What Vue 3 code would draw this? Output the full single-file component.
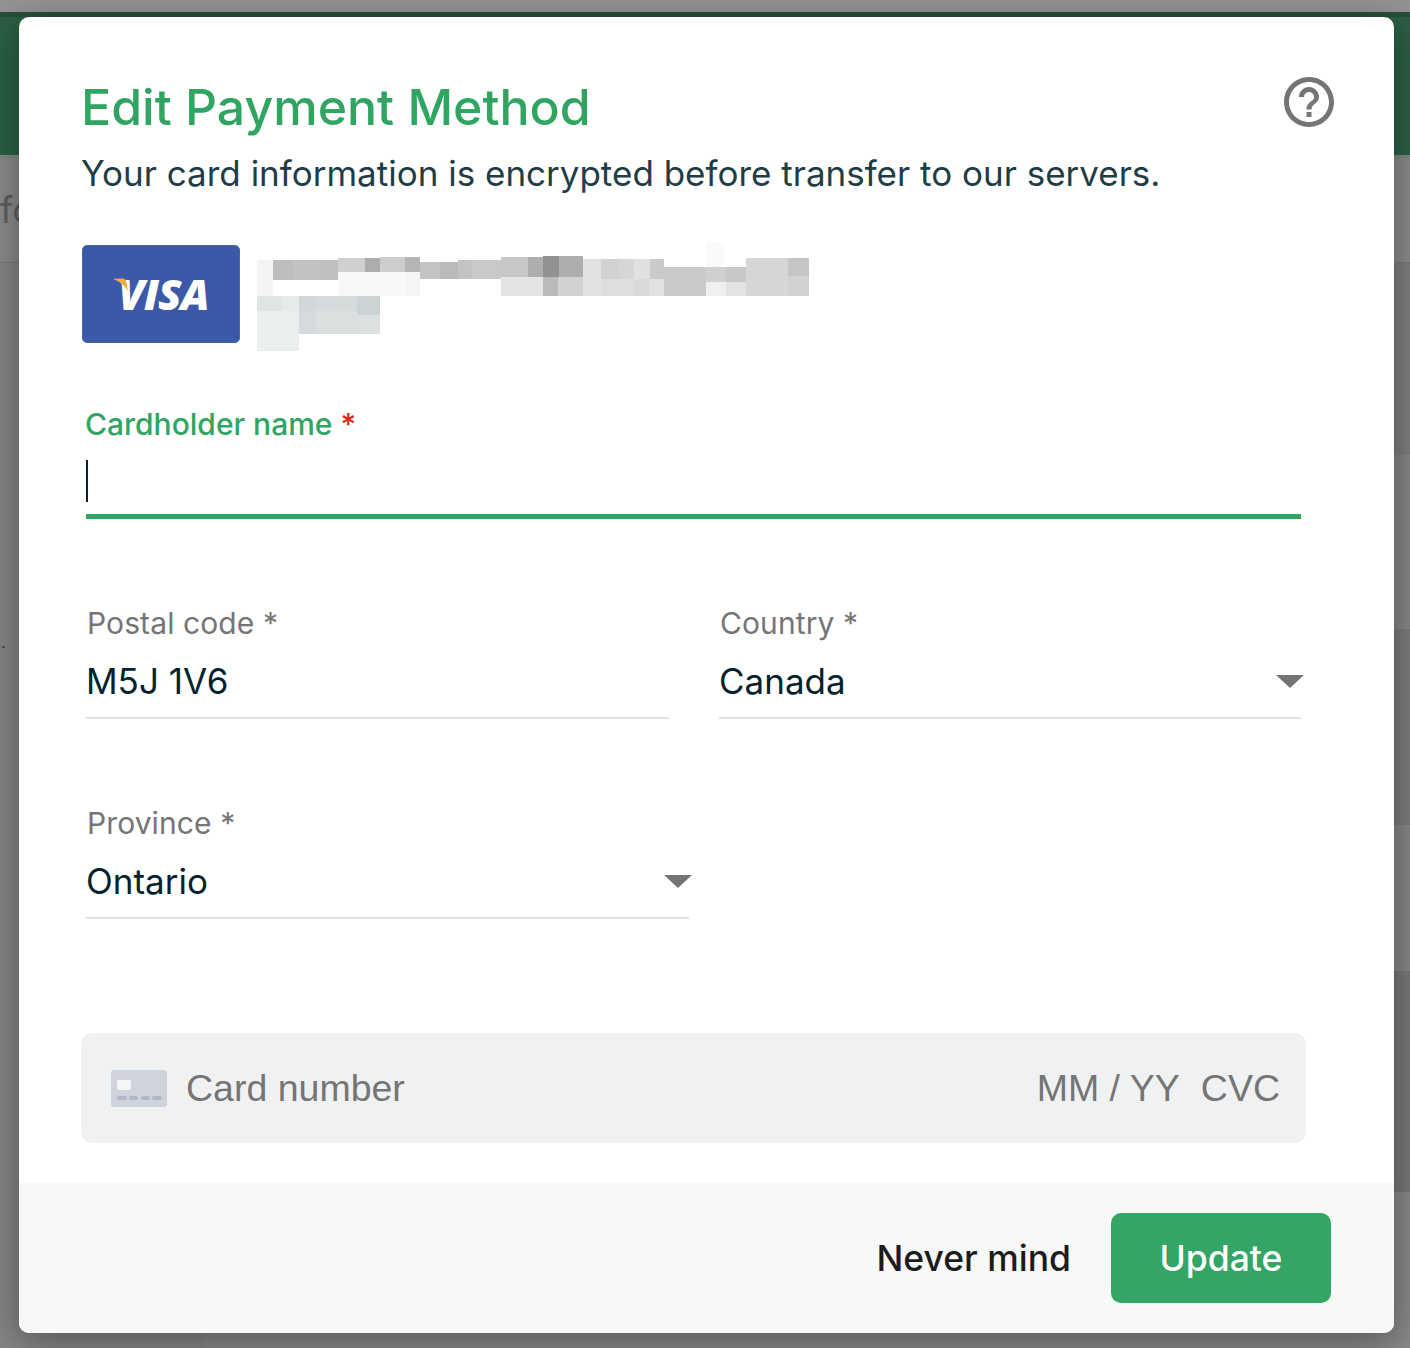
<script setup>
const blocks = [
  [19,75,44,108,'#f4f4f4'],[63,75,55,60,'#bebebe'],[118,75,77,60,'#c2c2c2'],[195,75,47,60,'#bfbfbf'],
  [242,69,74,42,'#d0d0d0'],[316,69,42,42,'#adadad'],[358,66,68,45,'#cdcdcd'],[426,66,42,45,'#b5b5b5'],
  [242,111,116,72,'#f7f7f7'],[358,111,72,72,'#f8f8f8'],[430,111,38,72,'#f5f5f5'],
  [468,81,54,51,'#c4c4c4'],[522,81,50,51,'#bababa'],[572,75,40,57,'#c3c3c3'],[612,75,78,57,'#c9c9c9'],
  [690,66,75,60,'#c8c8c8'],[765,66,41,60,'#aeaeae'],[806,63,44,63,'#929292'],[850,63,66,63,'#aeaeae'],
  [690,126,116,57,'#e4e4e4'],[806,126,41,57,'#b9b9b9'],[847,126,69,57,'#d2d2d2'],
  [916,72,50,111,'#e2e2e2'],[966,72,48,60,'#d2d2d2'],[1014,72,42,60,'#d6d6d6'],[1056,72,44,60,'#e0e0e0'],[1100,72,39,60,'#cacaca'],
  [966,132,90,51,'#dedede'],[1056,132,42,51,'#d9d9d9'],[1098,132,41,51,'#e1e1e1'],
  [1139,96,115,87,'#cacaca'],[1254,21,50,75,'#fafafa'],[1254,96,55,45,'#d0d0d0'],[1309,96,55,45,'#c8c8c8'],
  [1254,141,55,42,'#efefef'],[1309,141,55,42,'#e3e3e3'],[1364,69,116,114,'#d6d6d6'],[1480,69,58,54,'#c5c5c5'],[1480,123,58,60,'#d1d1d1'],
  [19,183,69,45,'#e0e4e4'],[88,183,47,45,'#e6eaea'],[135,183,47,45,'#d0d6d9'],[182,183,58,45,'#d5dbdd'],[240,183,55,45,'#d5dbdb'],[295,183,63,57,'#cbd3d5'],
  [19,228,116,120,'#ebeeef'],[135,228,47,69,'#d5dbdd'],[182,228,58,69,'#dae0e0'],[240,228,55,69,'#dae0e0'],[295,240,63,57,'#dce0e0']
]
const stripes = [
  { h: 192, c: '#7e7e7e' },
  { h: 174, c: '#868686' },
  { h: 196, c: '#7b7b7b' },
  { h: 146, c: '#868686' },
  { h: 221, c: '#787878' },
  { h: 157, c: '#888888' }
]
</script>

<template>
  <div class="page">
    <div class="backdrop">
      <div class="bd-top"></div>
      <div class="bd-green"></div>
      <div class="bd-tab"><span class="bd-text">fo</span></div>
      <div class="bd-lower">
        <div class="bd-side"><span class="bd-dot"></span></div>
        <div class="bd-main">
          <div v-for="(s, i) in stripes" :key="i" :style="{ height: s.h + 'px', background: s.c }"></div>
        </div>
      </div>
    </div>

    <section class="modal">
      <div class="body">
        <header class="head">
          <h1 class="title">Edit Payment Method</h1>
          <svg class="help" viewBox="0 0 24 24" width="60" height="60" aria-hidden="true">
            <path fill="#757575" d="M11 18h2v-2h-2v2zm1-16C6.48 2 2 6.48 2 12s4.48 10 10 10 10-4.48 10-10S17.52 2 12 2zm0 18c-4.41 0-8-3.59-8-8s3.59-8 8-8 8 3.59 8 8-3.59 8-8 8zm0-14c-2.21 0-4 1.79-4 4h2c0-1.1.9-2 2-2s2 .9 2 2c0 2-3 1.75-3 5h2c0-2.25 3-2.5 3-5 0-2.21-1.79-4-4-4z"/>
          </svg>
        </header>
        <p class="sub">Your card information is encrypted before transfer to our servers.</p>

        <div class="saved">
          <div class="visa">
            <span class="visa-text">VISA</span>
            <svg class="flick" viewBox="0 0 20 20" width="20" height="20" aria-hidden="true">
              <path fill="#f4a93a" d="M0 1C4 .6 7 .3 10 .6 12 .8 12.8 1.8 13.2 3.5L15 13C12 8 6 3 0 1z"/>
            </svg>
          </div>
          <svg class="pixels" viewBox="0 0 1568 375" preserveAspectRatio="none" width="570" height="125" shape-rendering="crispEdges" aria-hidden="true">
            <rect v-for="(b, i) in blocks" :key="i" :x="b[0]" :y="b[1]" :width="b[2]" :height="b[3]" :fill="b[4]" />
          </svg>
        </div>

        <div class="form">
          <div class="field field-active">
            <label class="label label-active">Cardholder name <span class="req">*</span></label>
            <div class="control control-active"><span class="cursor"></span></div>
          </div>
          <div class="row">
            <div class="field postal">
              <label class="label">Postal code *</label>
              <div class="control">M5J 1V6</div>
            </div>
            <div class="field country">
              <label class="label">Country *</label>
              <div class="control">Canada<span class="caret"></span></div>
            </div>
          </div>
          <div class="field province">
            <label class="label">Province *</label>
            <div class="control">Ontario<span class="caret"></span></div>
          </div>
        </div>

        <div class="stripe">
          <svg class="card-icon" viewBox="0 0 56 37" width="56" height="37" aria-hidden="true">
            <rect width="56" height="37" rx="3" fill="#cfd4dc"/>
            <rect x="6" y="10" width="14" height="10" rx="2" fill="#f4f5f7"/>
            <rect x="6" y="26" width="10" height="4" rx="2" fill="#b3b8c7"/>
            <rect x="18" y="26" width="9" height="4" rx="2" fill="#b3b8c7"/>
            <rect x="30" y="26" width="9" height="4" rx="2" fill="#b3b8c7"/>
            <rect x="41" y="26" width="10" height="4" rx="2" fill="#b3b8c7"/>
          </svg>
          <span class="ph ph-card">Card number</span>
          <span class="ph ph-date">MM / YY</span>
          <span class="ph ph-cvc">CVC</span>
        </div>
      </div>

      <footer class="foot">
        <button class="cancel" type="button">Never mind</button>
        <button class="update" type="button">Update</button>
      </footer>
    </section>
  </div>
</template>

<style>
html, body { margin: 0; padding: 0; background: #8a8a8a; overflow: hidden; }
</style>

<style scoped>
.page {
  position: relative;
  width: 1410px;
  height: 1348px;
  overflow: hidden;
  background: #858585;
  font-family: Inter, "Liberation Sans", sans-serif;
}
.backdrop { position: absolute; inset: 0; display: flex; flex-direction: column; }
.bd-top { height: 12px; background: #939393; }
.bd-green { height: 143px; background: #2b6044; border-top: 5px solid #264f38; box-sizing: border-box; }
.bd-tab { height: 108px; background: #8a8a8a; border-bottom: 1px solid #787878; box-sizing: border-box; border-top: 4px solid #7f8a83; overflow: hidden; }
.bd-text { display: block; margin-top: 31px; font-size: 36px; color: #5e5e5e; line-height: 40px; }
.bd-lower { flex: 1; display: flex; min-height: 0; }
.bd-side { position: relative; width: 204px; background: #858585; }
.bd-dot { position: absolute; left: 2px; top: 383px; width: 3px; height: 2px; background: #555; }
.bd-main { flex: 1; }

.modal {
  position: absolute;
  left: 19px;
  top: 17px;
  width: 1375px;
  height: 1316px;
  display: flex;
  flex-direction: column;
  background: #fff;
  border-radius: 10px;
  overflow: hidden;
  box-shadow: 0 8px 36px rgba(0, 0, 0, 0.38);
}
.body {
  flex: 1;
  min-height: 0;
  padding: 60px 60px 40px 63px;
  display: flex;
  flex-direction: column;
}
.head { display: flex; justify-content: space-between; align-items: flex-start; height: 60px; }
.title {
  margin: 0 0 0 -1px;
  font-size: 50px;
  line-height: 60px;
  font-weight: 500;
  color: #30a562;
}
.help { margin-top: -5px; margin-right: -5px; flex: none; }
.sub {
  margin: 12px 0 0 -1px;
  font-size: 35px;
  line-height: 48px;
  color: #1f3d47;
}
.saved { display: flex; margin-top: 48px; height: 98px; gap: 10px; }
.visa {
  position: relative;
  width: 158px;
  height: 98px;
  box-sizing: border-box;
  background: #3c58a8;
  border: 1px solid #4a65b0;
  border-radius: 5px;
  flex: none;
  display: flex;
  align-items: center;
  justify-content: center;
}
.flick { position: absolute; left: 30px; top: 32px; }
.visa-text {
  font-family: "Open Sans", sans-serif;
  font-style: italic;
  font-weight: 800;
  font-size: 43px;
  line-height: 1;
  color: #fff;
  margin-left: 5px;
  margin-top: -2px;
  letter-spacing: -1px;
}
.pixels { margin-top: -10px; flex: none; }

.form { margin-top: 63px; padding-left: 4px; display: flex; flex-direction: column; gap: 86px; }
.row { display: flex; gap: 50px; }
.field { display: flex; flex-direction: column; }
.field-active { width: 1215px; }
.postal { width: 583px; }
.country { width: 582px; }
.province { width: 603px; }
.label {
  font-size: 30px;
  line-height: 36px;
  font-weight: 400;
  color: #757575;
  letter-spacing: 0.1px;
  padding-left: 1px;
}
.label-active { color: #30a562; padding-left: 0; margin-left: -1px; font-weight: 500; letter-spacing: 0; }
.req { color: #e0241a; }
.control {
  position: relative;
  height: 78px;
  box-sizing: border-box;
  padding-top: 14px;
  line-height: 52px;
  font-size: 35px;
  color: #04222e;
  border-bottom: 2px solid #e0e0e0;
}
.control-active { border-bottom: 5px solid #30a562; height: 77px; }
.cursor {
  position: absolute;
  left: 0;
  top: 18px;
  width: 2px;
  height: 42px;
  background: #04222e;
}
.caret {
  position: absolute;
  right: -3px;
  top: 34px;
  width: 0;
  height: 0;
  border-left: 14.5px solid transparent;
  border-right: 14.5px solid transparent;
  border-top: 13px solid #757575;
}
.stripe {
  margin-top: auto;
  margin-left: -1px;
  width: 1225px;
  height: 110px;
  flex: none;
  box-sizing: border-box;
  padding: 0 26px 0 30px;
  background: #f0f1f3;
  border-radius: 12px;
  display: flex;
  align-items: center;
}
.card-icon { flex: none; }
.ph { font-family: "Liberation Sans", Arial, sans-serif; font-size: 37.5px; color: #757575; line-height: 44px; }
.ph-card { margin-left: 19px; flex: 1; }
.ph-cvc { margin-left: 21px; }
.foot {
  flex: none;
  height: 150px;
  background: #f7f9f9;
  display: flex;
  align-items: center;
  justify-content: flex-end;
  padding-right: 63px;
  gap: 40px;
}
.cancel, .update {
  font-family: inherit;
  font-size: 35.5px;
  border: 0;
  padding: 0;
  cursor: pointer;
}
.cancel { background: none; color: #1c1c1c; font-weight: 500; }
.update {
  width: 220px;
  height: 90px;
  border-radius: 10px;
  background: #33a564;
  color: #fff;
  font-weight: 500;
}
</style>
